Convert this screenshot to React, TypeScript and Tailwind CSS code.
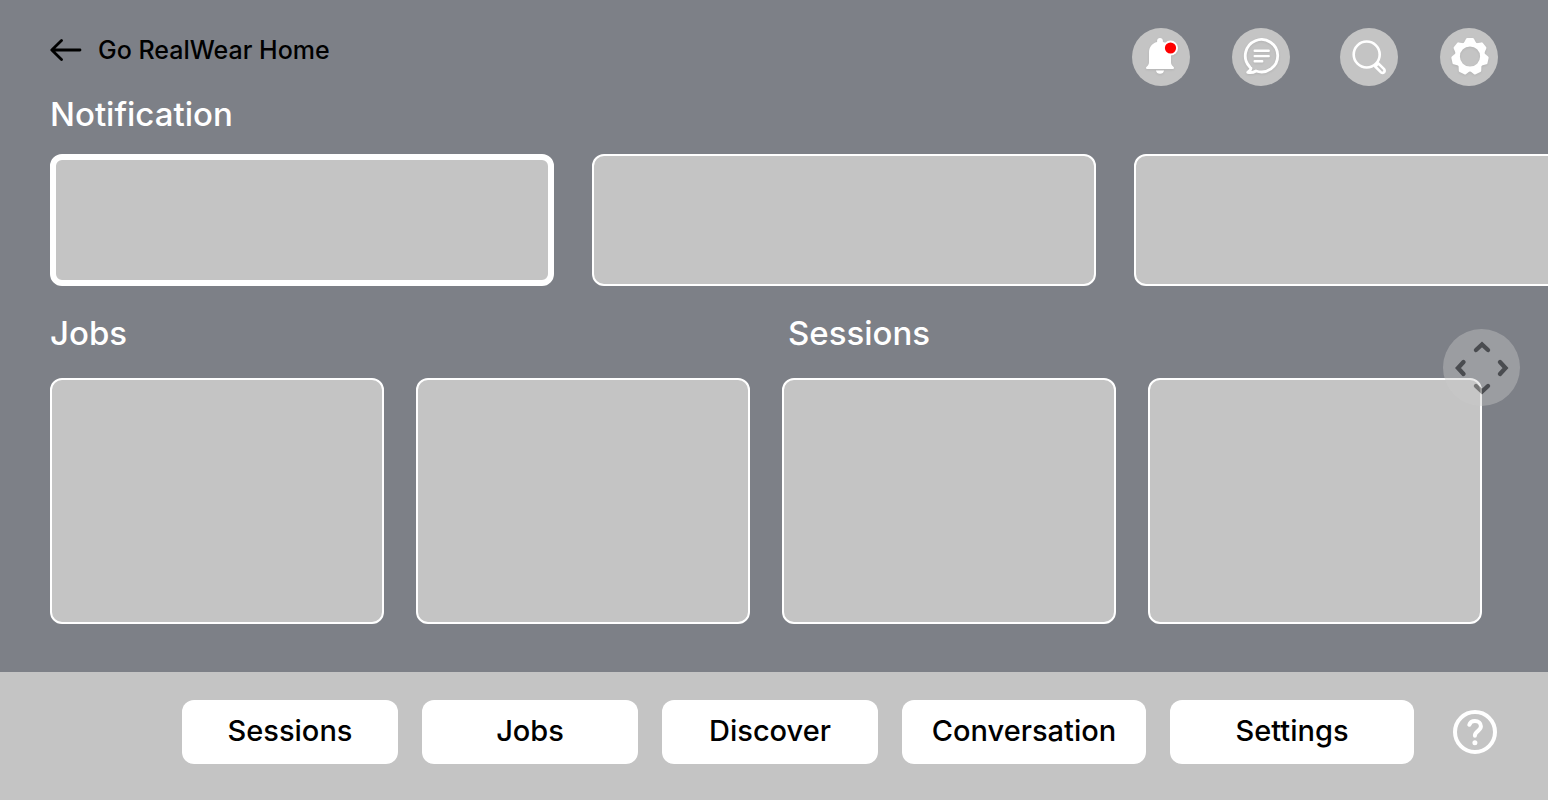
import React from "react";

const HEADING = "text-[33px] leading-10 font-medium text-white";
const ROUND_BUTTON =
  "w-[58px] h-[58px] rounded-full bg-[#c4c4c4] cursor-pointer shrink-0";
const ICON_SHADOW = "drop-shadow-[0_1px_1px_rgba(0,0,0,0.08)]";

const menu = [
  { label: "Sessions", className: "w-[216px]" },
  { label: "Jobs", className: "w-[216px]" },
  { label: "Discover", className: "w-[216px]" },
  { label: "Conversation", className: "w-[244px]" },
  { label: "Settings", className: "w-[244px]" },
];

function BackArrow() {
  return (
    <svg
      width="32"
      height="24"
      viewBox="0 0 32 24"
      fill="none"
      stroke="black"
      strokeWidth="2.8"
      strokeLinecap="round"
      strokeLinejoin="round"
      aria-hidden="true"
    >
      <path d="M30 12H2M11.5 2.5L1.8 12l9.7 9.5" />
    </svg>
  );
}

function BellIcon() {
  return (
    <svg
      width="58"
      height="58"
      viewBox="0 0 58 58"
      className={ICON_SHADOW}
      aria-hidden="true"
    >
      <g fill="white">
        <path d="M28 10c-1.7 0-2.9 1.200-2.900 2.800v1.200C20 15.300 17 19.300 17 24.500v9c0 1.700-.2 2.900-1.100 3.900l-1.500 1.700c-.9 1.200-.4 1.900.9 1.900h25.400c1.300 0 1.800-.7.900-1.900l-1.500-1.700c-.9-1-1.100-2.200-1.100-3.900v-9c0-5.200-3-9.200-8.100-10.500v-1.200c0-1.600-1.200-2.800-2.900-2.800z" />
        <path d="M24 42.500h8c-.2 2-1.800 3.300-4 3.300s-3.800-1.300-4-3.300z" />
      </g>
      <circle cx="38.5" cy="20" r="7.500" fill="white" />
      <circle cx="38.5" cy="20" r="5.600" fill="#ff0000" />
    </svg>
  );
}

function ChatIcon() {
  return (
    <svg
      width="58"
      height="58"
      viewBox="0 0 58 58"
      fill="none"
      stroke="white"
      strokeWidth="2.8"
      strokeLinecap="round"
      strokeLinejoin="round"
      className={ICON_SHADOW}
      aria-hidden="true"
    >
      <path d="M17.600 38.700A16.200 16.200 0 1 1 24 42.950c-2.600 1.600-5.400 2-8.300 1.400 1.900-1 3-2.400 3.300-4.300" />
      <path d="M22.700 22.700h14M22.700 28.100h14M22.700 33.300h7.500" strokeWidth="2.400" />
    </svg>
  );
}

function SearchIcon() {
  return (
    <svg
      width="58"
      height="58"
      viewBox="0 0 58 58"
      fill="none"
      stroke="white"
      strokeWidth="2.6"
      strokeLinejoin="round"
      aria-hidden="true"
    >
      <circle cx="26.700" cy="26.500" r="13" />
      <path d="M35.200 38.500l5.600 5.700c2.600 1.800 4.800-.6 3.300-3l-5.800-5.800z" />
    </svg>
  );
}

function GearIcon() {
  return (
    <svg
      width="58"
      height="58"
      viewBox="0 0 58 58"
      className={ICON_SHADOW}
      aria-hidden="true"
    >
      <g transform="translate(30 28.5)">
        <circle r="12.500" fill="none" stroke="white" strokeWidth="4.800" />
        {[0, 1, 2, 3, 4, 5, 6].map((tooth) => (
          <path
            key={tooth}
            d="M-4.800-12.800L-2.600-17H2.600L4.800-12.800z"
            fill="white"
            stroke="white"
            strokeWidth="3"
            strokeLinejoin="round"
            transform={`rotate(${(tooth * 360) / 7})`}
          />
        ))}
      </g>
    </svg>
  );
}

function MovePad() {
  return (
    <svg width="77" height="77" viewBox="0 0 77 77" aria-hidden="true">
      <circle cx="38.5" cy="38.5" r="38.5" fill="#cacaca" />
      <g
        fill="none"
        stroke="black"
        strokeWidth="4.400"
        strokeLinecap="round"
        strokeLinejoin="miter"
      >
        <path d="M33 21l6-5.500 6 5.500" />
        <path d="M33 57l6 5.500 6-5.500" />
        <path d="M20.500 33l-5.500 6 5.500 6" />
        <path d="M57 33l5.500 6-5.500 6" />
      </g>
    </svg>
  );
}

function HelpIcon() {
  return (
    <svg
      width="44"
      height="44"
      viewBox="0 0 44 44"
      fill="none"
      stroke="white"
      strokeWidth="4"
      strokeLinecap="round"
      strokeLinejoin="round"
      aria-hidden="true"
    >
      <circle cx="22" cy="22" r="20" />
      <path d="M16.300 14.800c.8-2.600 3-3.900 5.600-3.900 3.500 0 6 2.200 6 5.400 0 4.700-6 5-6 9.400" />
      <circle cx="21.900" cy="32.800" r="2.500" fill="white" stroke="none" />
    </svg>
  );
}

function Card() {
  return (
    <div className="h-[246px] rounded-xl border-2 border-white bg-[#c4c4c4]" />
  );
}

function App() {
  return (
    <div className="min-h-screen flex flex-col overflow-hidden bg-[#7d8087] font-['Inter',sans-serif]">
      <header className="flex items-start justify-between px-[50px] pt-7">
        <a href="#" className="flex items-center gap-4 h-11">
          <BackArrow />
          <span className="text-[25px] leading-8 font-medium text-black">
            Go RealWear Home
          </span>
        </a>
        <div className="flex gap-[50px]">
          <div className="flex gap-[42px]">
            <button aria-label="Notifications" className={ROUND_BUTTON}>
              <BellIcon />
            </button>
            <button aria-label="Messages" className={ROUND_BUTTON}>
              <ChatIcon />
            </button>
          </div>
          <div className="flex gap-[42px]">
            <button aria-label="Search" className={ROUND_BUTTON}>
              <SearchIcon />
            </button>
            <button aria-label="Preferences" className={ROUND_BUTTON}>
              <GearIcon />
            </button>
          </div>
        </div>
      </header>

      <main className="grow pb-12">
        <section className="pl-[50px] pt-2">
          <h2 className={HEADING}>Notification</h2>
          <div className="flex gap-[38px] mt-5 overflow-hidden">
            <div className="w-[504px] h-[132px] shrink-0 rounded-xl border-6 border-white bg-[#c4c4c4]" />
            <div className="w-[504px] h-[132px] shrink-0 rounded-xl border-2 border-white bg-[#c4c4c4]" />
            <div className="w-[504px] h-[132px] shrink-0 rounded-xl border-2 border-white bg-[#c4c4c4]" />
          </div>
        </section>

        <div className="relative grid grid-cols-2 gap-8 pl-[50px] pr-[66px] mt-[27px]">
          <section>
            <h2 className={HEADING}>Jobs</h2>
            <div className="grid grid-cols-2 gap-8 mt-[25px]">
              <Card />
              <Card />
            </div>
          </section>
          <section>
            <h2 className={`${HEADING} pl-1.5`}>Sessions</h2>
            <div className="grid grid-cols-2 gap-8 mt-[25px]">
              <Card />
              <Card />
            </div>
          </section>
          <button
            aria-label="Move"
            className="absolute right-7 top-4 rounded-full opacity-40 cursor-pointer"
          >
            <MovePad />
          </button>
        </div>
      </main>

      <footer className="flex items-center justify-end gap-[39px] pt-7 pb-9 pr-[51px] bg-[#c4c4c4]">
        <nav className="flex gap-6">
          {menu.map((item) => (
            <button
              key={item.label}
              className={`${item.className} h-16 pb-0.5 rounded-xl bg-white text-[29px] leading-10 font-medium text-black cursor-pointer`}
            >
              {item.label}
            </button>
          ))}
        </nav>
        <button aria-label="Help" className="rounded-full cursor-pointer">
          <HelpIcon />
        </button>
      </footer>
    </div>
  );
}

export default App;
